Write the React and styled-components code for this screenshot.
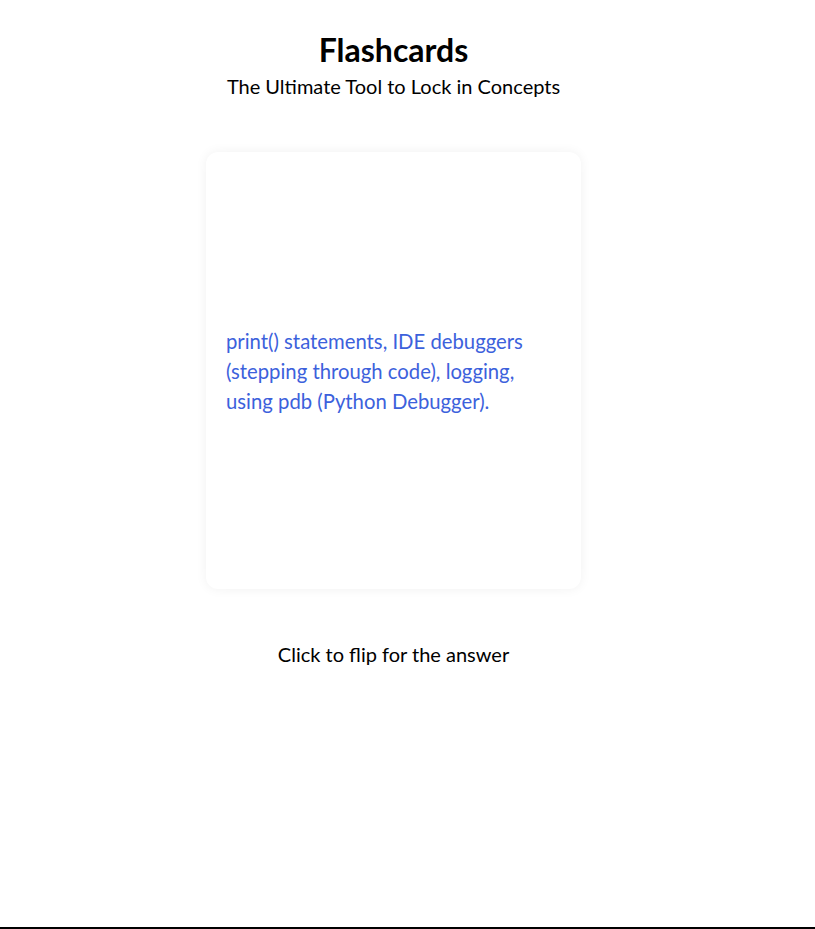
import React, { useState } from 'react';
import styled, { createGlobalStyle } from 'styled-components';

const GlobalStyle = createGlobalStyle`
  html, body {
    margin: 0;
    padding: 0;
    background: #ffffff;
  }
  body {
    font-family: 'Lato', 'Noto Sans', sans-serif;
    color: #000;
  }
`;

const StyledPage = styled.div`
  height: 927px;
  border-bottom: 2px solid #000;
`;

const StyledColumn = styled.main`
  width: 787px;
  display: flex;
  flex-direction: column;
  align-items: center;
`;

const StyledHeader = styled.header`
  display: flex;
  flex-direction: column;
  align-items: center;
  padding-top: 30px;

  h1 {
    margin: 0;
    font-size: 32px;
    font-weight: 700;
    line-height: 40px;
  }

  p {
    margin: 0;
    font-size: 20px;
    line-height: 32px;
  }
`;

const StyledCard = styled.div`
  width: 375px;
  height: 437px;
  margin-top: 50px;
  box-sizing: border-box;
  padding: 0 20px;
  display: flex;
  align-items: center;
  background: #fff;
  border-radius: 12px;
  box-shadow: 0 0 12px rgba(0, 0, 0, 0.06);
  cursor: pointer;
`;

const StyledCardText = styled.p`
  margin: 0;
  font-size: 20.3px;
  line-height: 30px;
  color: #3c61dc;
`;

const StyledHint = styled.p`
  margin: 53px 0 0;
  font-size: 20px;
  line-height: 24px;
`;

const App = () => {
  const [flipped, setFlipped] = useState(true);

  return (
    <>
      <GlobalStyle />
      <StyledPage>
        <StyledColumn>
          <StyledHeader>
            <h1>Flashcards</h1>
            <p>The Ultimate Tool to Lock in Concepts</p>
          </StyledHeader>

          <StyledCard onClick={() => setFlipped(!flipped)}>
            <StyledCardText>
              {flipped
                ? 'print() statements, IDE debuggers (stepping through code), logging, using pdb (Python Debugger).'
                : 'What are common ways to debug Python code?'}
            </StyledCardText>
          </StyledCard>

          <StyledHint>Click to flip for the answer</StyledHint>
        </StyledColumn>
      </StyledPage>
    </>
  );
};

export default App;
